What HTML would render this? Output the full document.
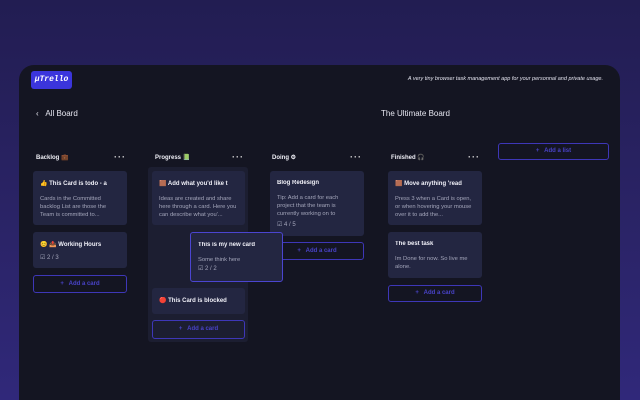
<!DOCTYPE html>
<html><head><meta charset="utf-8"><style>
*{margin:0;padding:0;box-sizing:border-box}
html,body{width:640px;height:400px;overflow:hidden}
body{background:linear-gradient(180deg,#221d52 0%,#2b2468 60%,#30287a 100%);font-family:"Liberation Sans","Noto Sans CJK SC",sans-serif;position:relative}
.win{position:absolute;left:19px;top:65px;width:601px;height:335px;background:#141522;border-radius:15px 15px 0 0}
.a{position:absolute}
.logo{left:31px;top:71px;width:41px;height:18px;background:#3b35dc;border-radius:3px;color:#fff;font:italic bold 8px "Liberation Mono",monospace;line-height:18px;text-align:center}
.tag{right:37px;top:76px;color:#e3e3ee;font-size:5.5px;font-style:italic}
.nav{color:#e6e6f0;font-size:8px}
.h{color:#eeeef5;font-size:6px;font-weight:bold}
.dots{color:#ddd;font-size:9px;letter-spacing:1px;font-weight:bold;line-height:8px}
.card{background:#232641;border-radius:3px;padding:9px 7px 0 7px;color:#e8e8f2}
.t{font-size:6px;font-weight:bold;color:#f0f0f8;white-space:nowrap;overflow:hidden}
.d{font-size:5.8px;line-height:8px;color:#a4a6bb;margin-top:8px;max-height:24px;overflow:hidden}
.chk{font-size:6px;color:#a4a6bb;margin-top:6px}
.btn{border:1px solid #3e37b8;border-radius:3px;color:#4943c8;font-size:6px;font-weight:bold;text-align:center}
</style></head><body>
<div class="win"></div>
<div class="a logo">µTrello</div>
<div class="a tag">A very tiny browser task management app for your personnal and private usage.</div>
<div class="a nav" style="left:36px;top:109px">‹&nbsp;&nbsp;&nbsp;All Board</div>
<div class="a nav" style="left:381px;top:109px">The Ultimate Board</div>

<div class="a h" style="left:36px;top:154px">Backlog 💼</div>
<div class="a dots" style="left:114px;top:153px">···</div>
<div class="a h" style="left:155px;top:154px">Progress 📗</div>
<div class="a dots" style="left:232px;top:153px">···</div>
<div class="a h" style="left:272px;top:154px">Doing ⚙</div>
<div class="a dots" style="left:350px;top:153px">···</div>
<div class="a h" style="left:391px;top:154px">Finished 🎧</div>
<div class="a dots" style="left:468px;top:153px">···</div>

<div class="a card" style="left:33px;top:171px;width:94px;height:54px"><div class="t">👍 This Card is todo - a</div><div class="d">Cards in the Committed backlog List are those the Team is committed to...</div></div>
<div class="a card" style="left:33px;top:232px;width:94px;height:36px"><div class="t">😊 📤 Working Hours</div><div class="chk">☑ 2 / 3</div></div>
<div class="a btn" style="left:33px;top:275px;width:94px;height:18px;line-height:16px">+&nbsp;&nbsp; Add a card</div>

<div class="a" style="left:148px;top:167px;width:100px;height:175px;background:#1c1e31;border-radius:3px"></div>
<div class="a card" style="left:152px;top:171px;width:93px;height:54px"><div class="t">🟫 Add what you'd like t</div><div class="d">Ideas are created and share here through a card. Here you can describe what you'...</div></div>
<div class="a card" style="left:152px;top:288px;width:93px;height:26px;padding-top:9px"><div class="t">🔴 This Card is blocked</div></div>
<div class="a btn" style="left:152px;top:320px;width:93px;height:19px;line-height:17px">+&nbsp;&nbsp; Add a card</div>

<div class="a card" style="left:270px;top:171px;width:94px;height:65px"><div class="t">Blog Redesign</div><div class="d">Tip: Add a card for each project that the team is currently working on to</div><div class="chk" style="margin-top:3px">☑ 4 / 5</div></div>
<div class="a btn" style="left:270px;top:242px;width:94px;height:18px;line-height:16px">+&nbsp;&nbsp; Add a card</div>

<div class="a card" style="left:190px;top:232px;width:93px;height:50px;border:1px solid #4b45d0"><div class="t">This is my new card</div><div class="d" style="margin-top:8px">Some think here</div><div class="chk" style="margin-top:1px">☑ 2 / 2</div></div>

<div class="a card" style="left:388px;top:171px;width:94px;height:54px"><div class="t">🟫 Move anything 'read</div><div class="d">Press 3 when a Card is open, or when hovering your mouse over it to add the...</div></div>
<div class="a card" style="left:388px;top:232px;width:94px;height:46px"><div class="t">The best task</div><div class="d">Im Done for now. So live me alone.</div></div>
<div class="a btn" style="left:388px;top:285px;width:94px;height:17px;line-height:15px">+&nbsp;&nbsp; Add a card</div>

<div class="a btn" style="left:498px;top:143px;width:111px;height:17px;line-height:15px">+&nbsp;&nbsp; Add a list</div>
</body></html>
